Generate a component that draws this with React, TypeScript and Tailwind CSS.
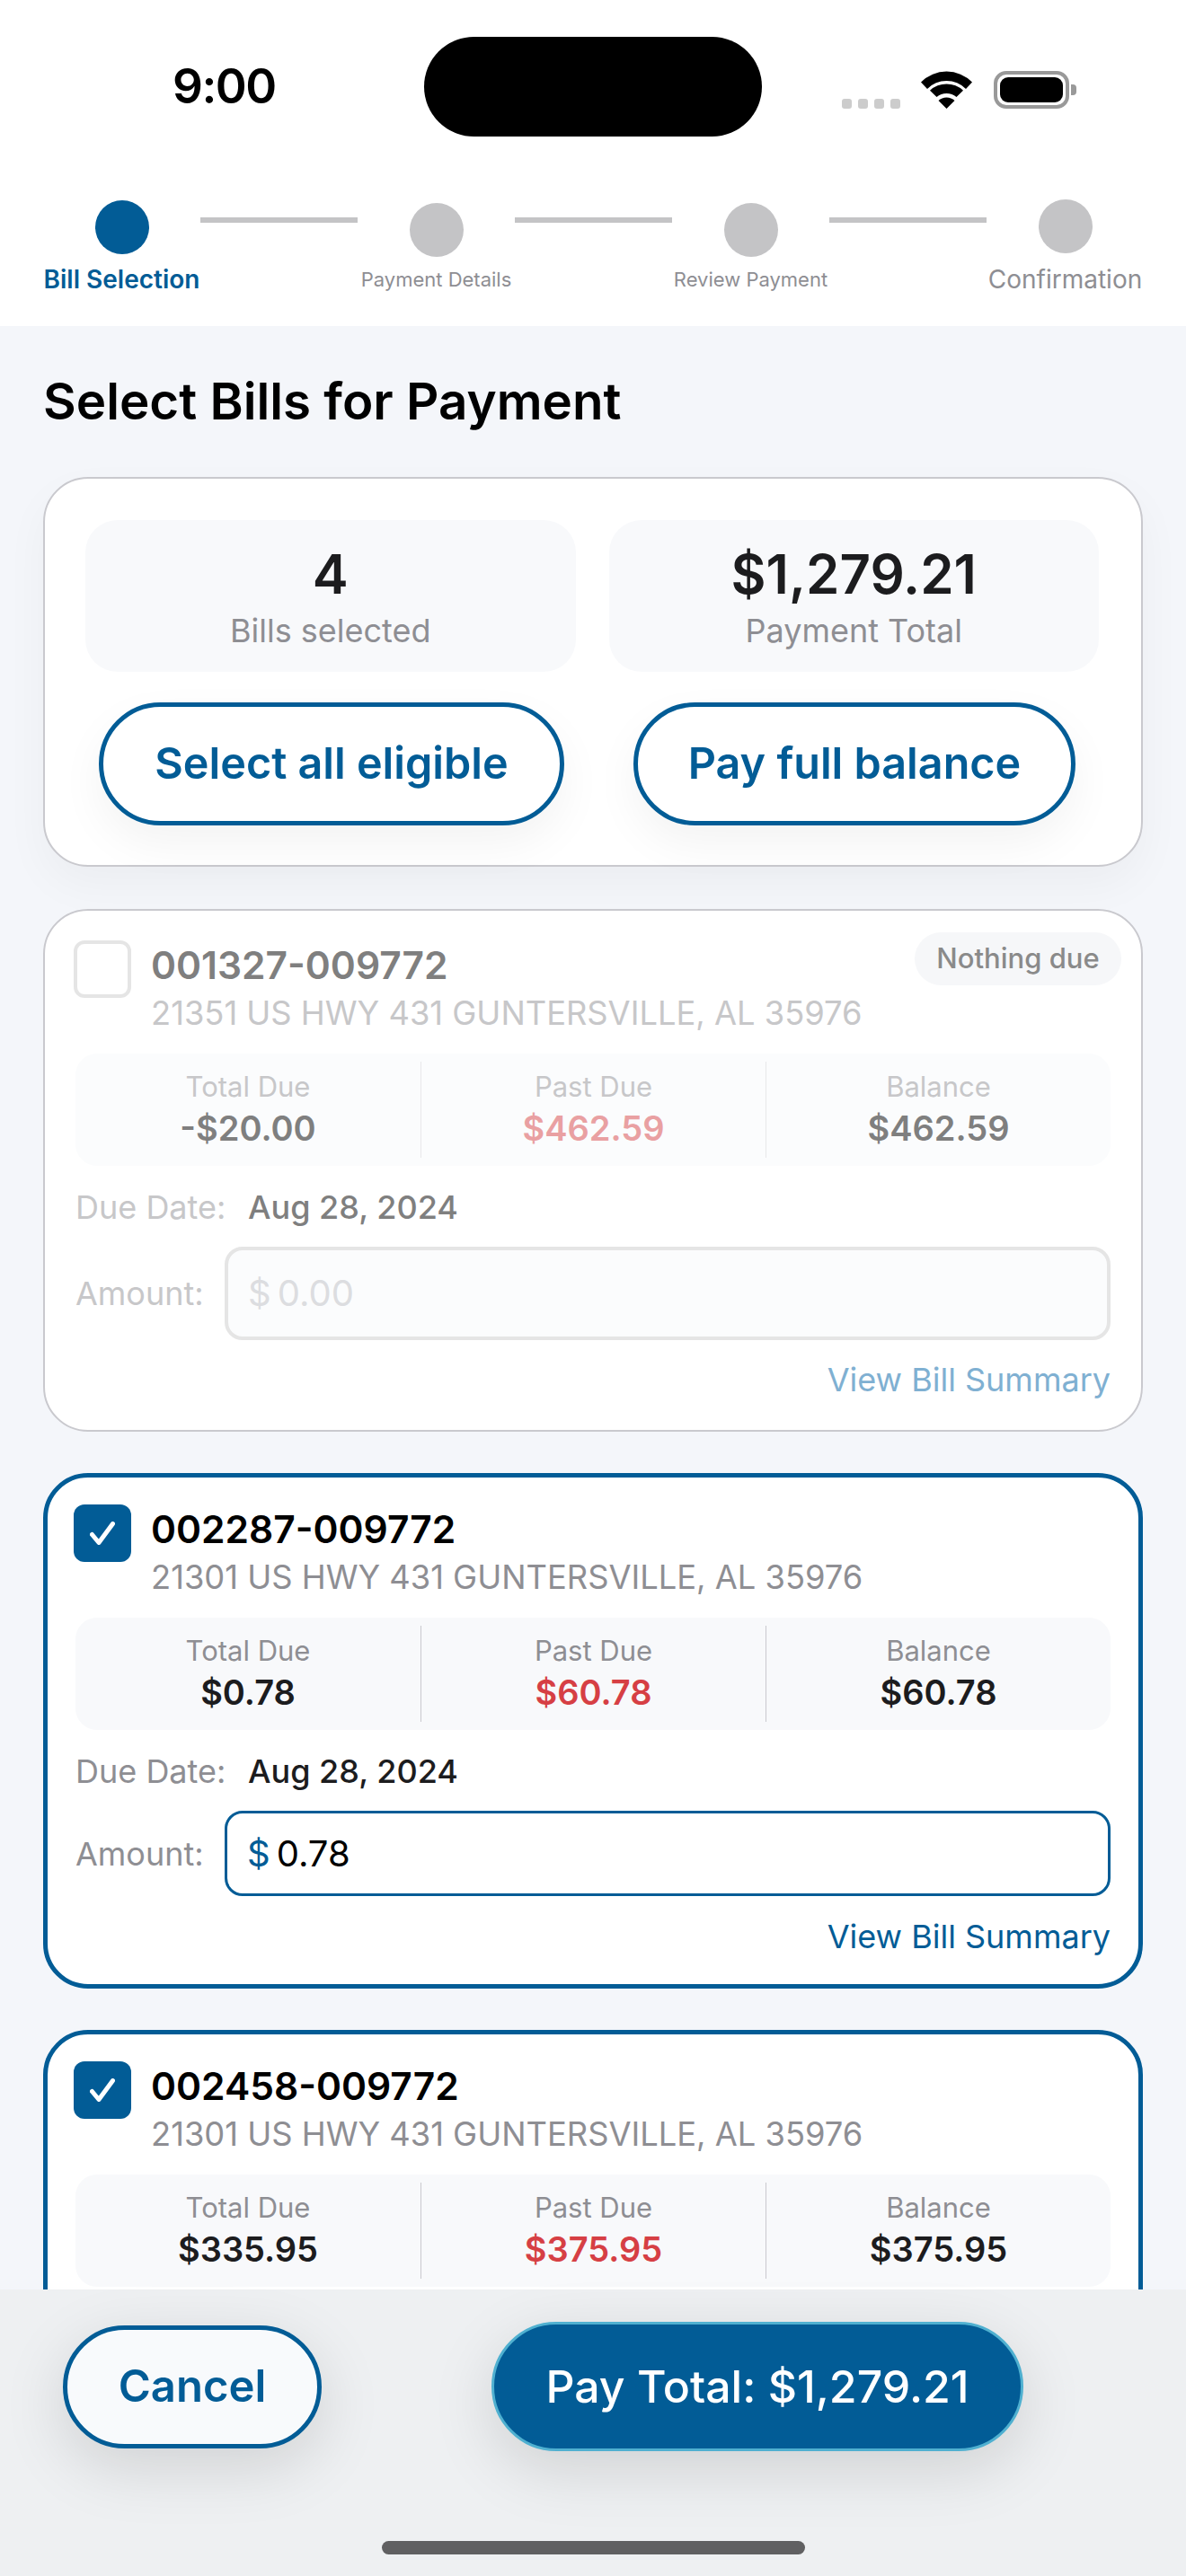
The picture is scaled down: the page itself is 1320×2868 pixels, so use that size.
import React from 'react';

const steps = [
    { label: 'Bill Selection', circle: 'mt-[1px] bg-[#025c96]', text: 'text-[28px] font-semibold text-[#025c96]' },
    { label: 'Payment Details', circle: 'mt-[4px] bg-[#c4c4c6]', text: 'text-[22px] text-[#8e8e93]' },
    { label: 'Review Payment', circle: 'mt-[4px] bg-[#c4c4c6]', text: 'text-[22px] text-[#8e8e93]' },
    { label: 'Confirmation', circle: 'mt-0 bg-[#c4c4c6]', text: 'text-[28px] text-[#8e8e93]' },
];

const StatusBar: React.FC = () => (
    <div className="flex items-center h-[111px] mt-[41px] pl-[192px]">
        <div className="w-[115px] text-[53px] leading-none font-semibold tracking-[-1.5px] text-black">9:00</div>
        <div className="ml-[165px] w-[376px] h-[111px] rounded-full bg-black"></div>
        <div className="ml-[89px] flex items-end h-[42px] mb-[-7px]">
            <div className="flex gap-[7px]">
                {[0, 1, 2, 3].map((i) => (
                    <div key={i} className="w-[11px] h-[11px] rounded-[3px] bg-[#cccccc]"></div>
                ))}
            </div>
            <svg className="ml-[23px]" width="57" height="42" viewBox="0 0 57 42" fill="#000">
                <path d="M0 12.5A40 40 0 0 1 57 12.5L50 20A30 30 0 0 0 7 20Z" />
                <path d="M10 21.8A27 27 0 0 1 47 21.8L39.5 29A17 17 0 0 0 17.5 29Z" />
                <path d="M19.5 33A13 13 0 0 1 37.5 33L28.5 42Z" />
            </svg>
            <div className="ml-[24px] flex items-center">
                <div className="w-[84px] h-[42px] rounded-[14px] border-[4px] border-[#999999] p-[3px]">
                    <div className="w-full h-full rounded-[9px] bg-black"></div>
                </div>
                <div className="ml-[2px] w-[6px] h-[12px] rounded-r-[4px] bg-[#999999]"></div>
            </div>
        </div>
    </div>
);

const Stepper: React.FC = () => (
    <div className="flex items-start mt-[70px] pl-[48px] h-[141px]">
        {steps.map((s, i) => (
            <React.Fragment key={s.label}>
                {i > 0 && <div className="w-[175px] h-[6px] mt-[20px] shrink-0 bg-[#c4c4c6]"></div>}
                <div className="w-[175px] shrink-0 flex flex-col items-center">
                    <div className="h-[70px]">
                        <div className={`w-[60px] h-[60px] rounded-full ${s.circle}`}></div>
                    </div>
                    <div className={`h-[38px] leading-[38px] whitespace-nowrap ${s.text}`}>{s.label}</div>
                </div>
            </React.Fragment>
        ))}
    </div>
);

const SummaryCard: React.FC = () => (
    <div className="h-[434px] rounded-[50px] border-2 border-[#c9c9ce] bg-white pt-[46px] pl-[45px] pr-[47px] shadow-[0_20px_50px_rgba(0,0,0,0.04)]">
        <div className="grid grid-cols-2 gap-[37px]">
            <div className="h-[169px] rounded-[36px] bg-[#f8f9fb] pt-[24px] flex flex-col items-center">
                <div className="h-[72px] leading-[72px] text-[60px] font-semibold text-[#1c1c1e]">4</div>
                <div className="h-[54px] leading-[54px] text-[36px] text-[#8e8e93]">Bills selected</div>
            </div>
            <div className="h-[169px] rounded-[36px] bg-[#f8f9fb] pt-[24px] flex flex-col items-center">
                <div className="h-[72px] leading-[72px] text-[60px] font-semibold text-[#1c1c1e]">$1,279.21</div>
                <div className="h-[54px] leading-[54px] text-[36px] text-[#8e8e93]">Payment Total</div>
            </div>
        </div>
        <div className="flex mt-[34px] ml-[15px] gap-[77px]">
            <div className="w-[518px] h-[137px] rounded-full border-[5px] border-[#025c96] bg-white flex items-center justify-center text-[48.5px] font-semibold text-[#025c96] shadow-[0_20px_50px_rgba(0,0,0,0.05)]">
                Select all eligible
            </div>
            <div className="w-[492px] h-[137px] rounded-full border-[5px] border-[#025c96] bg-white flex items-center justify-center text-[48.5px] font-semibold text-[#025c96] shadow-[0_20px_50px_rgba(0,0,0,0.05)]">
                Pay full balance
            </div>
        </div>
    </div>
);

type BillProps = {
    account: string;
    address: string;
    total: string;
    past: string;
    balance: string;
    amount?: string;
    selected?: boolean;
    cutOff?: boolean;
};

const BillCard: React.FC<BillProps> = ({ account, address, total, past, balance, amount, selected, cutOff }) => {
    const muted = !selected;
    return (
        <div
            className={`relative shrink-0 rounded-[50px] bg-white ${cutOff ? 'h-[574px]' : ''} ${
                selected
                    ? 'border-[5px] border-[#025c96] pt-[30px] pb-[30px] pl-[31px] pr-[31px]'
                    : 'border-2 border-[#c9c9ce] pt-[33px] pb-[33px] pl-[34px] pr-[34px]'
            }`}
        >
            {muted && (
                <div className="absolute top-[24px] right-[22px] w-[230px] h-[59px] rounded-full bg-[#f6f7f9] flex items-center justify-center text-[31px] font-medium text-[#8a8a8a]">
                    Nothing due
                </div>
            )}
            <div className="relative pl-[84px]">
                {selected ? (
                    <div className="absolute left-[-2px] top-0 w-[64px] h-[64px] rounded-[12px] bg-[#025c96] flex items-center justify-center">
                        <svg width="28" height="26" viewBox="0 0 28 26" fill="none" stroke="#fff" strokeWidth="5" strokeLinecap="round" strokeLinejoin="round">
                            <path d="M2.5 14.5L10 23.5L25.5 2.5" />
                        </svg>
                    </div>
                ) : (
                    <div className="absolute left-[-2px] top-0 w-[64px] h-[64px] rounded-[12px] border-[4px] border-[#e5e5e5] bg-white"></div>
                )}
                <div className={`h-[56px] leading-[56px] text-[42.5px] font-semibold ${muted ? 'text-[#7f7f7f]' : 'text-black'}`}>{account}</div>
                <div className={`h-[50px] leading-[50px] text-[36.3px] whitespace-nowrap ${muted ? 'text-[#c7c7c9]' : 'text-[#8e8e93]'}`}>{address}</div>
            </div>
            <div className={`grid grid-cols-3 h-[125px] mt-[20px] rounded-[24px] py-[9px] ${muted ? 'bg-[#fbfcfd]' : 'bg-[#f8f9fb]'}`}>
                {[
                    { label: 'Total Due', value: total, color: muted ? 'text-[#7f7f7f]' : 'text-[#1c1c1e]' },
                    { label: 'Past Due', value: past, color: muted ? 'text-[#e9a0a2]' : 'text-[#d63f44]' },
                    { label: 'Balance', value: balance, color: muted ? 'text-[#7f7f7f]' : 'text-[#1c1c1e]' },
                ].map((c, i) => (
                    <div key={c.label} className={`flex flex-col items-center pt-[8px] ${i > 0 ? (muted ? 'border-l border-[#e8e8ea]' : 'border-l border-[#c9c9ce]') : ''}`}>
                        <div className={`h-[40px] leading-[40px] text-[31px] ${muted ? 'text-[#c7c7c9]' : 'text-[#8e8e93]'}`}>{c.label}</div>
                        <div className={`h-[46px] mt-[3px] leading-[46px] text-[38px] font-semibold ${c.color}`}>{c.value}</div>
                    </div>
                ))}
            </div>
            {/* the footer covers everything below the stats on the last card */}
            {!cutOff && (
                <>
                    <div className="flex items-center h-[46px] mt-[23px] text-[36px]">
                        <div className={`w-[192px] ${muted ? 'text-[#c7c7c9]' : 'text-[#8e8e93]'}`}>Due Date:</div>
                        <div className={`font-medium ${muted ? 'text-[#7f7f7f]' : 'text-[#1c1c1e]'}`}>Aug 28, 2024</div>
                    </div>
                    <div className="flex items-center mt-[21px]">
                        <div className={`w-[166px] text-[36px] ${muted ? 'text-[#c7c7c9]' : 'text-[#8e8e93]'}`}>Amount:</div>
                        <div
                            className={`flex-1 flex items-center pl-[22px] rounded-[20px] text-[40px] ${
                                selected ? 'h-[95px] border-[3px] border-[#025c96] bg-white' : 'h-[104px] border-[4px] border-[#e5e5e5] bg-[#fbfcfd]'
                            }`}
                        >
                            <span className={selected ? 'text-[#025c96]' : 'text-[#dcdde0]'}>$</span>
                            <span className={`ml-[7px] ${selected ? 'text-black' : 'text-[#dcdde0]'}`}>{amount}</span>
                        </div>
                    </div>
                    <div className={`h-[46px] leading-[46px] text-right text-[36px] ${selected ? 'mt-[22px] text-[#025c96]' : 'mt-[21px] text-[#7fb0d2]'}`}>
                        View Bill Summary
                    </div>
                </>
            )}
        </div>
    );
};

const Footer: React.FC = () => (
    <div className="absolute left-0 right-0 bottom-0 h-[319px] bg-[#eef0f2] pt-[36px] flex flex-col">
        <div className="flex items-center h-[144px]">
            <div className="ml-[70px] w-[288px] h-[137px] rounded-full border-[5px] border-[#025c96] bg-[#f8fafc] flex items-center justify-center text-[49px] font-semibold text-[#025c96] shadow-[0_20px_70px_rgba(0,0,0,0.13)]">
                Cancel
            </div>
            <div className="ml-[189px] w-[592px] h-[144px] rounded-full border-[3px] border-[#4fb0d0] bg-[#025c96] flex items-center justify-center text-[50px] font-medium text-white shadow-[0_20px_70px_rgba(0,0,0,0.13)]">
                Pay Total: $1,279.21
            </div>
        </div>
        <div className="mt-[100px] self-center w-[471px] h-[15px] rounded-full bg-[#606062]"></div>
    </div>
);

export default function App() {
    return (
        <div className="relative w-[1320px] h-[2868px] overflow-hidden bg-[#f4f6fa] font-['Inter',sans-serif]">
            <div className="bg-white h-[363px] flex flex-col">
                <StatusBar />
                <Stepper />
            </div>
            <div className="px-[48px]">
                <div className="h-[168px] pt-[48px] text-[56.5px] leading-[72px] font-semibold text-black">Select Bills for Payment</div>
                <SummaryCard />
                <div className="flex flex-col gap-[46px] mt-[47px]">
                    <BillCard
                        account="001327-009772"
                        address="21351 US HWY 431 GUNTERSVILLE, AL 35976"
                        total="-$20.00"
                        past="$462.59"
                        balance="$462.59"
                        amount="0.00"
                    />
                    <BillCard
                        selected
                        account="002287-009772"
                        address="21301 US HWY 431 GUNTERSVILLE, AL 35976"
                        total="$0.78"
                        past="$60.78"
                        balance="$60.78"
                        amount="0.78"
                    />
                    <BillCard
                        selected
                        cutOff
                        account="002458-009772"
                        address="21301 US HWY 431 GUNTERSVILLE, AL 35976"
                        total="$335.95"
                        past="$375.95"
                        balance="$375.95"
                    />
                </div>
            </div>
            <Footer />
        </div>
    );
}
